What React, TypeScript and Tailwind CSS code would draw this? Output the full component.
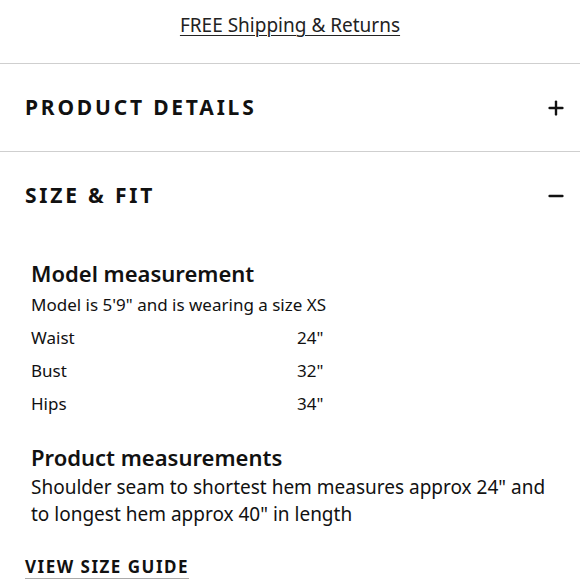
import { Plus, Minus } from 'lucide-react';

const modelRows = [
    { label: 'Waist', value: '24"' },
    { label: 'Bust', value: '32"' },
    { label: 'Hips', value: '34"' },
];

function SectionHeader({ title, open }: { title: string; open: boolean }) {
    return (
        <div className="flex items-center justify-between pl-[25px] pr-[13px] h-[87px]">
            <h2 className="text-[21px] font-bold tracking-[2.8px] text-[#111]">{title}</h2>
            {open ? <Minus className="h-[22px] w-[22px]" strokeWidth={2.6} /> : <Plus className="h-[22px] w-[22px]" strokeWidth={2.6} />}
        </div>
    );
}

export default function App() {
    return (
        <div className="w-[580px] h-[580px] overflow-hidden bg-white text-[#111]" style={{ fontFamily: '"Noto Sans", sans-serif' }}>
            <div className="h-[63px] flex justify-center pt-[11px]">
                <a className="text-[19px] text-[#222] underline underline-offset-[3px] decoration-1">FREE Shipping &amp; Returns</a>
            </div>
            <div className="h-px bg-[#cfcfcf]" />
            <SectionHeader title="PRODUCT DETAILS" open={false} />
            <div className="h-px bg-[#cfcfcf]" />
            <SectionHeader title="SIZE & FIT" open={true} />

            <div className="pl-[31px] pt-[19px]">
                <h3 className="text-[22px] font-semibold leading-[30px]">Model measurement</h3>
                <p className="text-[17px] leading-[33px]">Model is 5'9" and is wearing a size XS</p>
                {modelRows.map((row) => (
                    <div key={row.label} className="grid grid-cols-[266px_1fr] text-[17px] leading-[33px]">
                        <span>{row.label}</span>
                        <span>{row.value}</span>
                    </div>
                ))}
                <h3 className="mt-[22px] text-[22px] font-semibold leading-[30px]">Product measurements</h3>
                <p className="text-[19px] leading-[27px] max-w-[520px] mt-[2px]">
                    Shoulder seam to shortest hem measures approx 24" and to longest hem approx 40" in length
                </p>
            </div>
            <div className="pl-[25px] pt-[27px] leading-[24px]">
                <a className="text-[17px] font-bold tracking-[1.5px] border-b border-[#aaa]">VIEW SIZE GUIDE</a>
            </div>
        </div>
    );
}
